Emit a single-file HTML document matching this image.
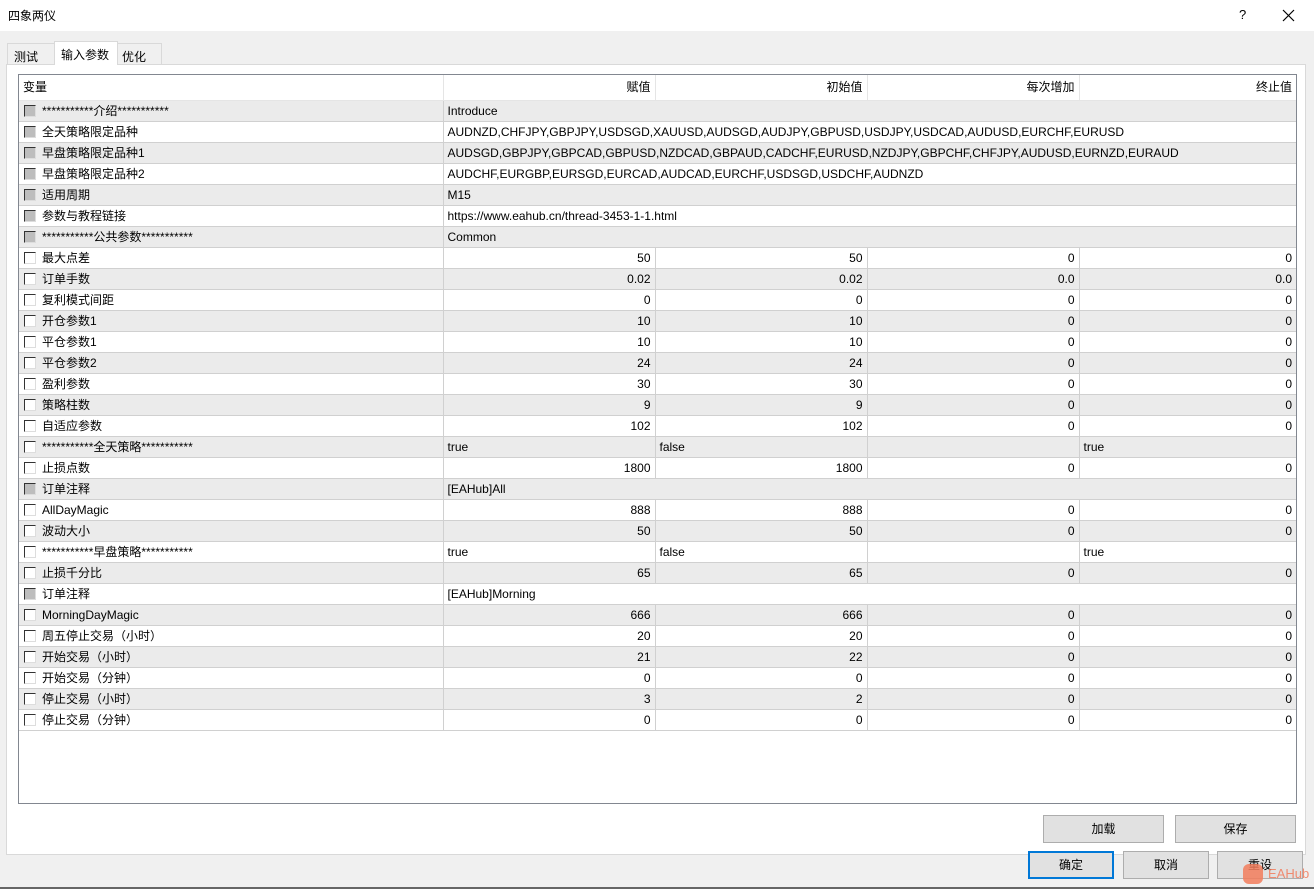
<!DOCTYPE html>
<html><head><meta charset="utf-8"><style>
*{box-sizing:border-box;margin:0;padding:0}
body{width:1314px;height:889px;background:#f0f0f0;font-family:"Liberation Sans","Noto Sans CJK SC",sans-serif;font-size:12px;color:#000;position:relative;overflow:hidden}
.title{position:absolute;left:0;top:0;width:1314px;height:31px;background:#fff}
.title .t{position:absolute;left:8px;top:7px;font-size:12px}
.title .q{position:absolute;left:1239px;top:7px;font-size:13px}
.tab{position:absolute;top:43px;height:22px;border:1px solid #d9d9d9;background:#f0f0f0;padding:4px 6px 0}
.panel{position:absolute;left:6px;top:64px;width:1300px;height:791px;background:#fff;border:1px solid #d9d9d9}
.box{position:absolute;left:18px;top:74px;width:1279px;height:730px;border:1px solid #828790;background:#fff}
table{position:absolute;left:0;top:0;border-collapse:collapse;table-layout:fixed;width:1277px}
td{height:21px;border:1px solid #d0d0d0;padding:1px 4px 0;white-space:nowrap;overflow:hidden;line-height:19px}
tr.h td{height:25px;border-top:none;border-color:#e5e5e5}
tr.g td{background:#ebebeb}
td.r{text-align:right}
td:first-child{border-left:none}
td:last-child{border-right:none}
.cb{display:inline-block;width:12px;height:12px;border:1px solid #333;border-right-color:#ddd;border-bottom-color:#ddd;background:#fff;vertical-align:-2px;margin-right:6px;margin-left:1px}
.cb.d{background:#bdbdbd}
.btn{position:absolute;height:28px;border:1px solid #adadad;background:#e1e1e1;text-align:center;line-height:26px}
</style></head><body>
<div class="title"><span class="t">四象两仪</span><span class="q">?</span>
<svg style="position:absolute;left:1282px;top:9px" width="13" height="13"><path d="M1 1L12 12M12 1L1 12" stroke="#000" stroke-width="1.2"/></svg></div>
<div class="tab" style="left:7px;width:48px">测试</div>
<div class="panel"></div>
<div class="tab" style="left:54px;top:41px;width:64px;height:24px;background:#fff;border-bottom:none;z-index:2">输入参数</div>
<div class="tab" style="left:117px;width:45px;padding-left:4px">优化</div>
<div class="box"><table>
<colgroup><col style="width:424px"><col style="width:212px"><col style="width:212px"><col style="width:212px"><col style="width:217px"></colgroup>
<tr class="h"><td>变量</td><td class="r">赋值</td><td class="r">初始值</td><td class="r">每次增加</td><td class="r">终止值</td></tr>
<tr class="g"><td><span class="cb d"></span>***********介绍***********</td><td colspan="4">Introduce</td></tr>
<tr><td><span class="cb d"></span>全天策略限定品种</td><td colspan="4">AUDNZD,CHFJPY,GBPJPY,USDSGD,XAUUSD,AUDSGD,AUDJPY,GBPUSD,USDJPY,USDCAD,AUDUSD,EURCHF,EURUSD</td></tr>
<tr class="g"><td><span class="cb d"></span>早盘策略限定品种1</td><td colspan="4">AUDSGD,GBPJPY,GBPCAD,GBPUSD,NZDCAD,GBPAUD,CADCHF,EURUSD,NZDJPY,GBPCHF,CHFJPY,AUDUSD,EURNZD,EURAUD</td></tr>
<tr><td><span class="cb d"></span>早盘策略限定品种2</td><td colspan="4">AUDCHF,EURGBP,EURSGD,EURCAD,AUDCAD,EURCHF,USDSGD,USDCHF,AUDNZD</td></tr>
<tr class="g"><td><span class="cb d"></span>适用周期</td><td colspan="4">M15</td></tr>
<tr><td><span class="cb d"></span>参数与教程链接</td><td colspan="4">https://www.eahub.cn/thread-3453-1-1.html</td></tr>
<tr class="g"><td><span class="cb d"></span>***********公共参数***********</td><td colspan="4">Common</td></tr>
<tr><td><span class="cb"></span>最大点差</td><td class="r">50</td><td class="r">50</td><td class="r">0</td><td class="r">0</td></tr>
<tr class="g"><td><span class="cb"></span>订单手数</td><td class="r">0.02</td><td class="r">0.02</td><td class="r">0.0</td><td class="r">0.0</td></tr>
<tr><td><span class="cb"></span>复利模式间距</td><td class="r">0</td><td class="r">0</td><td class="r">0</td><td class="r">0</td></tr>
<tr class="g"><td><span class="cb"></span>开仓参数1</td><td class="r">10</td><td class="r">10</td><td class="r">0</td><td class="r">0</td></tr>
<tr><td><span class="cb"></span>平仓参数1</td><td class="r">10</td><td class="r">10</td><td class="r">0</td><td class="r">0</td></tr>
<tr class="g"><td><span class="cb"></span>平仓参数2</td><td class="r">24</td><td class="r">24</td><td class="r">0</td><td class="r">0</td></tr>
<tr><td><span class="cb"></span>盈利参数</td><td class="r">30</td><td class="r">30</td><td class="r">0</td><td class="r">0</td></tr>
<tr class="g"><td><span class="cb"></span>策略柱数</td><td class="r">9</td><td class="r">9</td><td class="r">0</td><td class="r">0</td></tr>
<tr><td><span class="cb"></span>自适应参数</td><td class="r">102</td><td class="r">102</td><td class="r">0</td><td class="r">0</td></tr>
<tr class="g"><td><span class="cb"></span>***********全天策略***********</td><td>true</td><td>false</td><td></td><td>true</td></tr>
<tr><td><span class="cb"></span>止损点数</td><td class="r">1800</td><td class="r">1800</td><td class="r">0</td><td class="r">0</td></tr>
<tr class="g"><td><span class="cb d"></span>订单注释</td><td colspan="4">[EAHub]All</td></tr>
<tr><td><span class="cb"></span>AllDayMagic</td><td class="r">888</td><td class="r">888</td><td class="r">0</td><td class="r">0</td></tr>
<tr class="g"><td><span class="cb"></span>波动大小</td><td class="r">50</td><td class="r">50</td><td class="r">0</td><td class="r">0</td></tr>
<tr><td><span class="cb"></span>***********早盘策略***********</td><td>true</td><td>false</td><td></td><td>true</td></tr>
<tr class="g"><td><span class="cb"></span>止损千分比</td><td class="r">65</td><td class="r">65</td><td class="r">0</td><td class="r">0</td></tr>
<tr><td><span class="cb d"></span>订单注释</td><td colspan="4">[EAHub]Morning</td></tr>
<tr class="g"><td><span class="cb"></span>MorningDayMagic</td><td class="r">666</td><td class="r">666</td><td class="r">0</td><td class="r">0</td></tr>
<tr><td><span class="cb"></span>周五停止交易（小时）</td><td class="r">20</td><td class="r">20</td><td class="r">0</td><td class="r">0</td></tr>
<tr class="g"><td><span class="cb"></span>开始交易（小时）</td><td class="r">21</td><td class="r">22</td><td class="r">0</td><td class="r">0</td></tr>
<tr><td><span class="cb"></span>开始交易（分钟）</td><td class="r">0</td><td class="r">0</td><td class="r">0</td><td class="r">0</td></tr>
<tr class="g"><td><span class="cb"></span>停止交易（小时）</td><td class="r">3</td><td class="r">2</td><td class="r">0</td><td class="r">0</td></tr>
<tr><td><span class="cb"></span>停止交易（分钟）</td><td class="r">0</td><td class="r">0</td><td class="r">0</td><td class="r">0</td></tr>
</table></div>
<div class="btn" style="left:1043px;top:815px;width:121px">加载</div>
<div class="btn" style="left:1175px;top:815px;width:121px">保存</div>
<div class="btn" style="left:1028px;top:851px;width:86px;border:2px solid #0078d7;line-height:24px">确定</div>
<div class="btn" style="left:1123px;top:851px;width:86px">取消</div>
<div class="btn" style="left:1217px;top:851px;width:86px">重设</div>
<div style="position:absolute;left:1243px;top:864px;width:20px;height:20px;border-radius:6px;background:#f27c5c;opacity:.85"></div>
<div style="position:absolute;left:1268px;top:866px;color:#f27c5c;font-size:13px;opacity:.85">EAHub</div>
<div style="position:absolute;left:0;top:887px;width:1314px;height:2px;background:#666"></div>
</body></html>
